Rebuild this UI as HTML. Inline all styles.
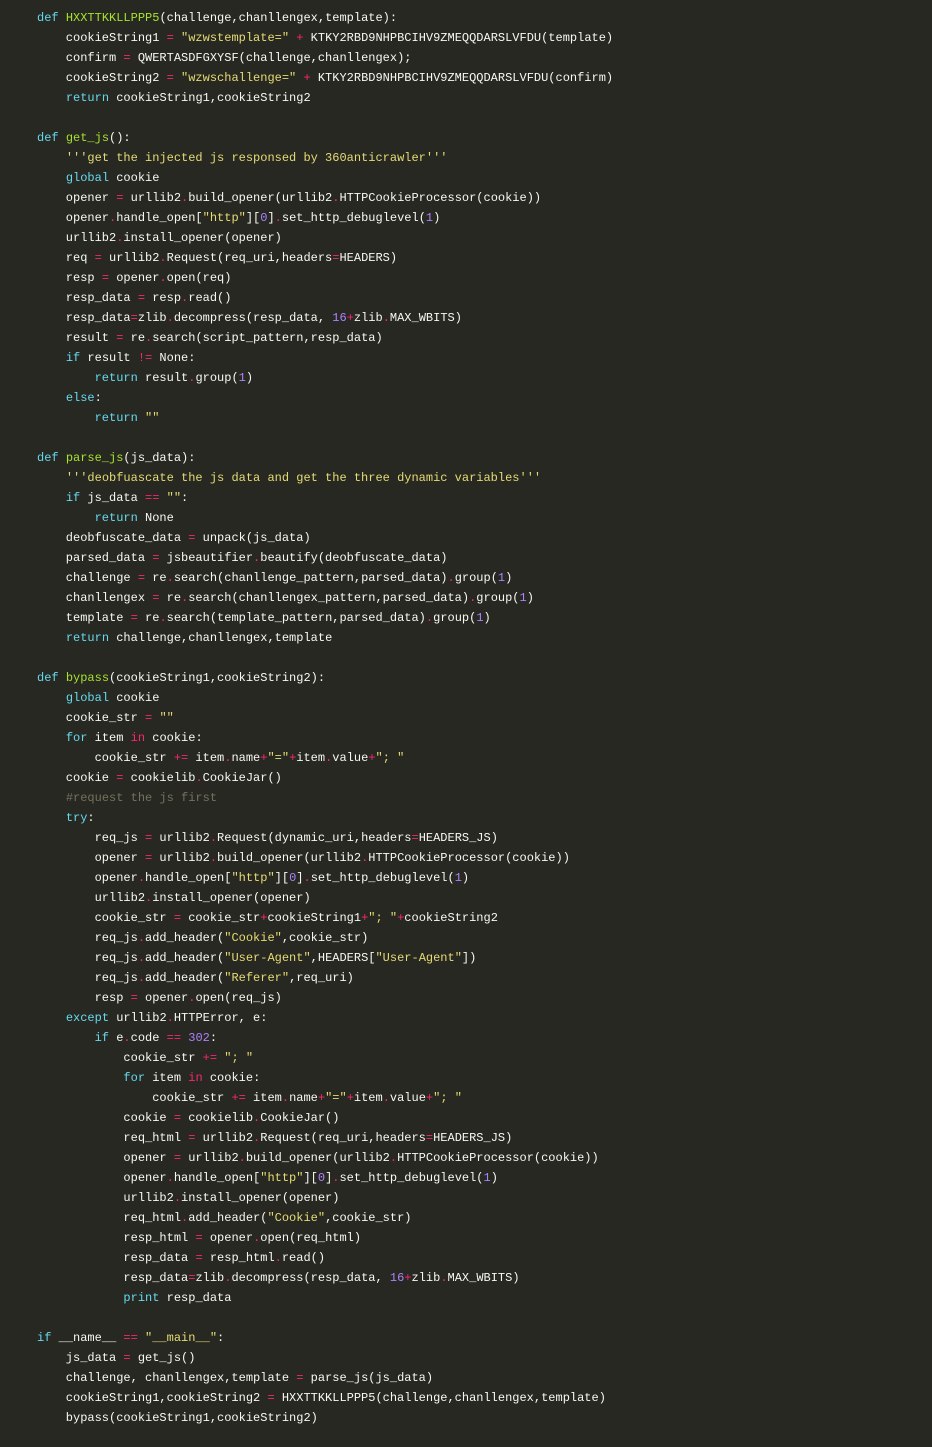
<!DOCTYPE html>
<html><head><meta charset="utf-8"><style>
html,body{margin:0;padding:0;background:#272822;width:932px;height:1447px;overflow:hidden}
pre{margin:0;padding:8px 0 0 37px;font-family:"Liberation Mono",monospace;font-size:12px;line-height:20px;color:#f8f8f2}
.k{color:#66d9ef}.f{color:#a6e22e}.s{color:#e6db74}.o{color:#f92672}.n{color:#ae81ff}.c{color:#75715e}
</style></head><body><pre><span class="k">def</span> <span class="f">HXXTTKKLLPPP5</span>(challenge,chanllengex,template):
    cookieString1 <span class="o">=</span> <span class="s">"wzwstemplate="</span> <span class="o">+</span> KTKY2RBD9NHPBCIHV9ZMEQQDARSLVFDU(template)
    confirm <span class="o">=</span> QWERTASDFGXYSF(challenge,chanllengex);
    cookieString2 <span class="o">=</span> <span class="s">"wzwschallenge="</span> <span class="o">+</span> KTKY2RBD9NHPBCIHV9ZMEQQDARSLVFDU(confirm)
    <span class="k">return</span> cookieString1,cookieString2

<span class="k">def</span> <span class="f">get_js</span>():
    <span class="s">'''get the injected js responsed by 360anticrawler'''</span>
    <span class="k">global</span> cookie
    opener <span class="o">=</span> urllib2<span class="o">.</span>build_opener(urllib2<span class="o">.</span>HTTPCookieProcessor(cookie))
    opener<span class="o">.</span>handle_open[<span class="s">"http"</span>][<span class="n">0</span>]<span class="o">.</span>set_http_debuglevel(<span class="n">1</span>)
    urllib2<span class="o">.</span>install_opener(opener)
    req <span class="o">=</span> urllib2<span class="o">.</span>Request(req_uri,headers<span class="o">=</span>HEADERS)
    resp <span class="o">=</span> opener<span class="o">.</span>open(req)
    resp_data <span class="o">=</span> resp<span class="o">.</span>read()
    resp_data<span class="o">=</span>zlib<span class="o">.</span>decompress(resp_data, <span class="n">16</span><span class="o">+</span>zlib<span class="o">.</span>MAX_WBITS)
    result <span class="o">=</span> re<span class="o">.</span>search(script_pattern,resp_data)
    <span class="k">if</span> result <span class="o">!=</span> None:
        <span class="k">return</span> result<span class="o">.</span>group(<span class="n">1</span>)
    <span class="k">else</span>:
        <span class="k">return</span> <span class="s">""</span>

<span class="k">def</span> <span class="f">parse_js</span>(js_data):
    <span class="s">'''deobfuascate the js data and get the three dynamic variables'''</span>
    <span class="k">if</span> js_data <span class="o">==</span> <span class="s">""</span>:
        <span class="k">return</span> None
    deobfuscate_data <span class="o">=</span> unpack(js_data)
    parsed_data <span class="o">=</span> jsbeautifier<span class="o">.</span>beautify(deobfuscate_data)
    challenge <span class="o">=</span> re<span class="o">.</span>search(chanllenge_pattern,parsed_data)<span class="o">.</span>group(<span class="n">1</span>)
    chanllengex <span class="o">=</span> re<span class="o">.</span>search(chanllengex_pattern,parsed_data)<span class="o">.</span>group(<span class="n">1</span>)
    template <span class="o">=</span> re<span class="o">.</span>search(template_pattern,parsed_data)<span class="o">.</span>group(<span class="n">1</span>)
    <span class="k">return</span> challenge,chanllengex,template

<span class="k">def</span> <span class="f">bypass</span>(cookieString1,cookieString2):
    <span class="k">global</span> cookie
    cookie_str <span class="o">=</span> <span class="s">""</span>
    <span class="k">for</span> item <span class="o">in</span> cookie:
        cookie_str <span class="o">+=</span> item<span class="o">.</span>name<span class="o">+</span><span class="s">"="</span><span class="o">+</span>item<span class="o">.</span>value<span class="o">+</span><span class="s">"; "</span>
    cookie <span class="o">=</span> cookielib<span class="o">.</span>CookieJar()
    <span class="c">#request the js first</span>
    <span class="k">try</span>:
        req_js <span class="o">=</span> urllib2<span class="o">.</span>Request(dynamic_uri,headers<span class="o">=</span>HEADERS_JS)
        opener <span class="o">=</span> urllib2<span class="o">.</span>build_opener(urllib2<span class="o">.</span>HTTPCookieProcessor(cookie))
        opener<span class="o">.</span>handle_open[<span class="s">"http"</span>][<span class="n">0</span>]<span class="o">.</span>set_http_debuglevel(<span class="n">1</span>)
        urllib2<span class="o">.</span>install_opener(opener)
        cookie_str <span class="o">=</span> cookie_str<span class="o">+</span>cookieString1<span class="o">+</span><span class="s">"; "</span><span class="o">+</span>cookieString2
        req_js<span class="o">.</span>add_header(<span class="s">"Cookie"</span>,cookie_str)
        req_js<span class="o">.</span>add_header(<span class="s">"User-Agent"</span>,HEADERS[<span class="s">"User-Agent"</span>])
        req_js<span class="o">.</span>add_header(<span class="s">"Referer"</span>,req_uri)
        resp <span class="o">=</span> opener<span class="o">.</span>open(req_js)
    <span class="k">except</span> urllib2<span class="o">.</span>HTTPError, e:
        <span class="k">if</span> e<span class="o">.</span>code <span class="o">==</span> <span class="n">302</span>:
            cookie_str <span class="o">+=</span> <span class="s">"; "</span>
            <span class="k">for</span> item <span class="o">in</span> cookie:
                cookie_str <span class="o">+=</span> item<span class="o">.</span>name<span class="o">+</span><span class="s">"="</span><span class="o">+</span>item<span class="o">.</span>value<span class="o">+</span><span class="s">"; "</span>
            cookie <span class="o">=</span> cookielib<span class="o">.</span>CookieJar()
            req_html <span class="o">=</span> urllib2<span class="o">.</span>Request(req_uri,headers<span class="o">=</span>HEADERS_JS)
            opener <span class="o">=</span> urllib2<span class="o">.</span>build_opener(urllib2<span class="o">.</span>HTTPCookieProcessor(cookie))
            opener<span class="o">.</span>handle_open[<span class="s">"http"</span>][<span class="n">0</span>]<span class="o">.</span>set_http_debuglevel(<span class="n">1</span>)
            urllib2<span class="o">.</span>install_opener(opener)
            req_html<span class="o">.</span>add_header(<span class="s">"Cookie"</span>,cookie_str)
            resp_html <span class="o">=</span> opener<span class="o">.</span>open(req_html)
            resp_data <span class="o">=</span> resp_html<span class="o">.</span>read()
            resp_data<span class="o">=</span>zlib<span class="o">.</span>decompress(resp_data, <span class="n">16</span><span class="o">+</span>zlib<span class="o">.</span>MAX_WBITS)
            <span class="k">print</span> resp_data

<span class="k">if</span> __name__ <span class="o">==</span> <span class="s">"__main__"</span>:
    js_data <span class="o">=</span> get_js()
    challenge, chanllengex,template <span class="o">=</span> parse_js(js_data)
    cookieString1,cookieString2 <span class="o">=</span> HXXTTKKLLPPP5(challenge,chanllengex,template)
    bypass(cookieString1,cookieString2)
</pre></body></html>
